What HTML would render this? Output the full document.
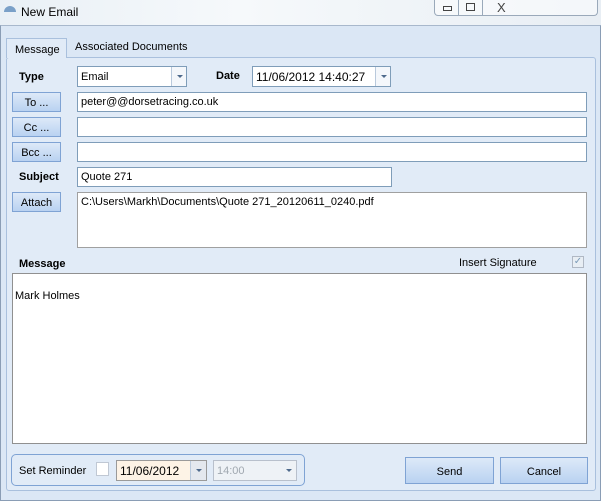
<html><head><style>
body{margin:0;width:601px;height:501px;overflow:hidden;font-family:"Liberation Sans",sans-serif;font-size:11px;background:#eaf1f8;position:relative}
div{position:absolute;box-sizing:border-box}
.tb{background:#fff;border:1px solid #7f9db9;padding:3px 0 0 3px;white-space:nowrap}
.btn{background:linear-gradient(#dde9f8,#b9d2f1);border:1px solid #7fa3d4;text-align:center;padding-top:4px}
.lb{font-weight:bold}
.dd{background:#fff;border:1px solid #7f9db9;padding:4px 0 0 3px}
.arr{right:0;top:0;bottom:0;width:15px;border-left:1px solid #b9c9dc;background:#f4f7fb}
.arr:after{content:"";position:absolute;left:5px;top:8px;border:3px solid transparent;border-top:3px solid #4e6a8c}
</style></head><body>
<div style="left:0;top:0;width:601px;height:26px;background:linear-gradient(90deg,#e9f0f6,#f6f9fb 40%,#e8eef4)"></div>
<div style="left:4px;top:6px;width:12px;height:6px;background:#7aa0c8;border-radius:6px 6px 0 0"></div>
<div style="left:21px;top:5px;font-size:12px">New Email</div>
<div style="left:434px;top:0;width:164px;height:16px;border:1px solid #9aa9ba;border-top:none;border-radius:0 0 4px 4px;background:rgba(255,255,255,.5)"></div>
<div style="left:458px;top:0;width:1px;height:16px;background:#9aa9ba"></div>
<div style="left:482px;top:0;width:1px;height:16px;background:#9aa9ba"></div>
<div style="left:443px;top:6px;width:9px;height:5px;border:1px solid #444"></div>
<div style="left:466px;top:3px;width:9px;height:8px;border:1px solid #444"></div>
<div style="left:497px;top:0;font-size:13px;color:#444">X</div>
<div style="left:0;top:25px;width:601px;height:476px;background:#dbe7f5;border:1px solid #8a9db5;border-top-color:#a8b8cc"></div>
<div style="left:6px;top:57px;width:590px;height:434px;border:1px solid #a9c0dd;background:#e1ebf7;border-radius:3px"></div>
<div style="left:6px;top:38px;width:61px;height:20px;border:1px solid #a9c0dd;border-bottom:none;background:#e1ebf7;padding:5px 0 0 8px">Message</div>
<div style="left:75px;top:41px">Associated Documents</div>
<div class="lb" style="left:19px;top:71px">Type</div>
<div class="dd" style="left:77px;top:66px;width:110px;height:21px">Email<div class="arr"></div></div>
<div class="lb" style="left:216px;top:70px">Date</div>
<div class="dd" style="left:252px;top:66px;width:139px;height:21px;font-size:12px;padding-top:3px">11/06/2012 14:40:27<div class="arr"></div></div>
<div class="btn" style="left:12px;top:92px;width:49px;height:20px">To ...</div>
<div class="tb" style="left:77px;top:92px;width:510px;height:20px">peter@@dorsetracing.co.uk</div>
<div class="btn" style="left:12px;top:117px;width:49px;height:20px">Cc ...</div>
<div class="tb" style="left:77px;top:117px;width:510px;height:20px"></div>
<div class="btn" style="left:12px;top:142px;width:49px;height:20px">Bcc ...</div>
<div class="tb" style="left:77px;top:142px;width:510px;height:20px"></div>
<div class="lb" style="left:19px;top:171px">Subject</div>
<div class="tb" style="left:77px;top:167px;width:315px;height:20px">Quote 271</div>
<div class="btn" style="left:12px;top:192px;width:49px;height:20px">Attach</div>
<div class="tb" style="left:77px;top:192px;width:510px;height:56px;border-color:#a0a0a0">C:\Users\Markh\Documents\Quote 271_20120611_0240.pdf</div>
<div class="lb" style="left:19px;top:258px">Message</div>
<div style="left:459px;top:257px">Insert Signature</div>
<div style="left:572px;top:256px;width:12px;height:12px;border:1px solid #b0b8c4;background:#e8eef4;color:#7a9ab8;font-size:10px;line-height:10px;text-align:center">✓</div>
<div class="tb" style="left:12px;top:273px;width:575px;height:171px;border-color:#909090;padding:16px 0 0 2px">Mark Holmes</div>
<div style="left:11px;top:454px;width:294px;height:32px;border:1px solid #7fa3d4;border-radius:5px"></div>
<div style="left:19px;top:465px">Set Reminder</div>
<div style="left:96px;top:462px;width:13px;height:14px;background:#fff;border:1px solid #c0c8d4"></div>
<div style="left:116px;top:460px;width:91px;height:21px;border:1px solid #9a9a9a;background:#fdf3e6;padding:3px 0 0 3px;font-size:12px">11/06/2012<div class="arr" style="width:16px;background:#e4e8ee"></div></div>
<div style="left:213px;top:460px;width:84px;height:21px;border:1px solid #b8c0cc;background:#eef2f6;color:#a0a8b0;padding:4px 0 0 3px">14:00<div class="arr" style="border:none;background:none"></div></div>
<div class="btn" style="left:405px;top:457px;width:89px;height:27px;padding-top:8px">Send</div>
<div class="btn" style="left:500px;top:457px;width:88px;height:27px;padding-top:8px">Cancel</div>
</body></html>
